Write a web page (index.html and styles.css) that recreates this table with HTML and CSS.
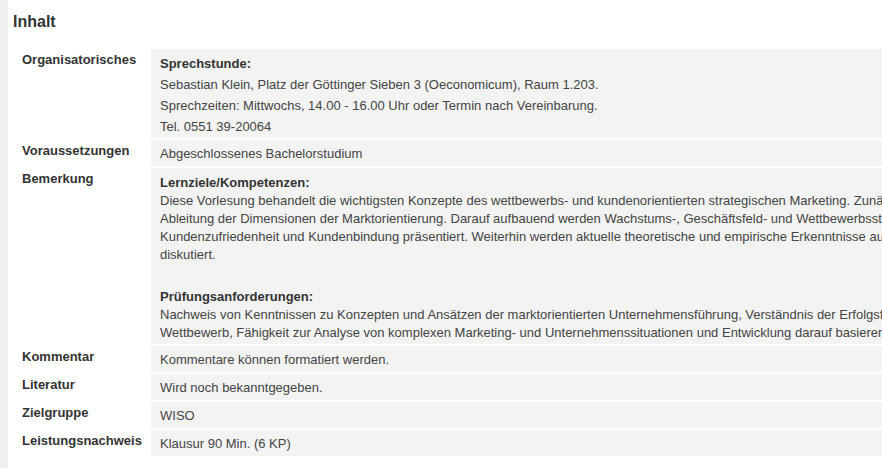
FILE: index.html
```html
<!DOCTYPE html>
<html lang="de">
<head>
    <meta charset="UTF-8">
    <title>Inhalt</title>
    <link rel="stylesheet" href="styles.css">
</head>
<body>
    <div class="page">
        <h2 class="section-title">Inhalt</h2>

        <div class="details">
            <div class="label">Organisatorisches</div>
            <div class="value value-org">
                <b>Sprechstunde:</b><br>
                Sebastian Klein, Platz der Göttinger Sieben 3 (Oeconomicum), Raum 1.203.<br>
                Sprechzeiten: Mittwochs, 14.00 - 16.00 Uhr oder Termin nach Vereinbarung.<br>
                Tel. 0551 39-20064
            </div>

            <div class="label">Voraussetzungen</div>
            <div class="value">Abgeschlossenes Bachelorstudium</div>

            <div class="label">Bemerkung</div>
            <div class="value value-long">
                <div class="block">
                    <b>Lernziele/Kompetenzen:</b><br>
                    Diese Vorlesung behandelt die wichtigsten Konzepte des wettbewerbs- und kundenorientierten strategischen Marketing. Zunächst erfolgt die Herleitung und<br>
                    Ableitung der Dimensionen der Marktorientierung. Darauf aufbauend werden Wachstums-, Geschäftsfeld- und Wettbewerbsstrategien sowie Konzepte der<br>
                    Kundenzufriedenheit und Kundenbindung präsentiert. Weiterhin werden aktuelle theoretische und empirische Erkenntnisse aus der Marketingforschung<br>
                    diskutiert.
                </div>
                <div class="block block-gap">
                    <b>Prüfungsanforderungen:</b><br>
                    Nachweis von Kenntnissen zu Konzepten und Ansätzen der marktorientierten Unternehmensführung, Verständnis der Erfolgsfaktoren im<br>
                    Wettbewerb, Fähigkeit zur Analyse von komplexen Marketing- und Unternehmenssituationen und Entwicklung darauf basierender Strategien.
                </div>
            </div>

            <div class="label">Kommentar</div>
            <div class="value">Kommentare können formatiert werden.</div>

            <div class="label">Literatur</div>
            <div class="value">Wird noch bekanntgegeben.</div>

            <div class="label">Zielgruppe</div>
            <div class="value">WISO</div>

            <div class="label">Leistungsnachweis</div>
            <div class="value">Klausur 90 Min. (6 KP)</div>
        </div>
    </div>
</body>
</html>
```

FILE: styles.css
```css
html, body {
    overflow: hidden;
}
body {
    margin: 0;
    background: #f0f0f0;
    font-family: "Liberation Sans", Arial, sans-serif;
    font-size: 13px;
    color: #444;
}
.page {
    margin-left: 8px;
    min-height: 468px;
    padding: 12px 0 0 5px;
    background: white;
    box-sizing: border-box;
}
.section-title {
    margin: 0 0 17px;
    font-size: 16px;
    line-height: 20px;
    font-weight: bold;
    color: #333;
}
.details {
    display: grid;
    grid-template-columns: 136px 1fr;
    gap: 2px;
}
.label {
    padding: 1px 9px 0;
    line-height: 19px;
    font-weight: bold;
    color: #333;
}
.value {
    padding: 5px 9px 3px;
    line-height: 18px;
    background: #f3f3f3;
    white-space: nowrap;
}
.value b {
    color: #333;
}
.value-org {
    padding: 4px 9px 1px;
    line-height: 21px;
}
.value-long {
    padding: 6px 9px 2px;
}
.block-gap {
    margin-top: 24px;
}
```
